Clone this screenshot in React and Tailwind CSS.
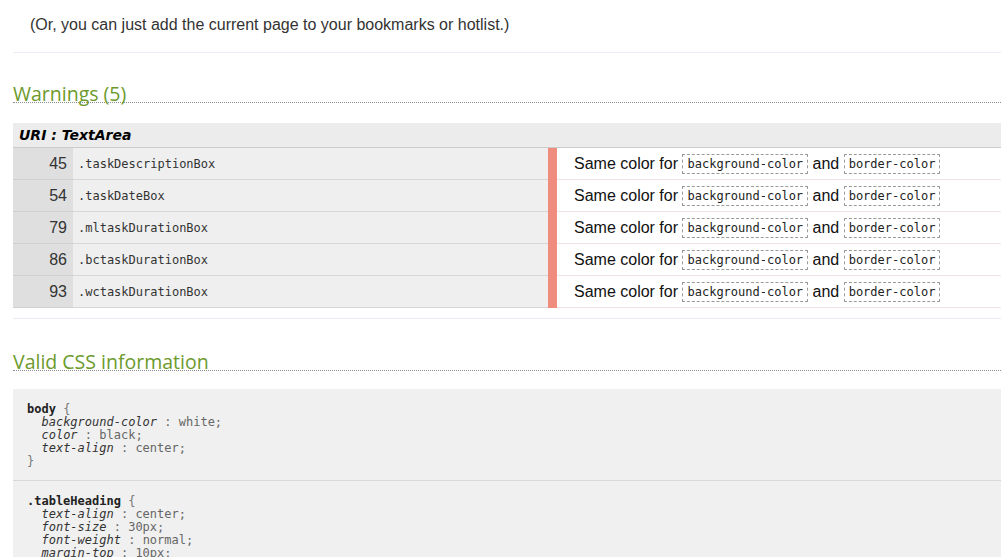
import React from "react";

const rows = [
  ["45", ".taskDescriptionBox"],
  ["54", ".taskDateBox"],
  ["79", ".mltaskDurationBox"],
  ["86", ".bctaskDurationBox"],
  ["93", ".wctaskDurationBox"],
];

function Code({ children }) {
  return (
    <code className="inline-block h-[20px] leading-[18px] px-[4px] border border-dashed border-[#9a9a9a] font-['DejaVu_Sans_Mono',monospace] text-[12px] text-[#222] align-middle">
      {children}
    </code>
  );
}

function Heading({ children }) {
  return (
    <h2 className="ml-[13px] h-[21px] border-b border-dotted border-[#8f8f8f] font-['Open_Sans',sans-serif] text-[19.5px] leading-[24px] text-[#6c9a2c] font-normal whitespace-nowrap">
      {children}
    </h2>
  );
}

function Block({ sel, props, last }) {
  return (
    <div className={"pl-[14px] pt-[14px] pb-[12px] " + (last ? "" : "border-b border-[#d9d9d9]")}>
      <div className="font-['DejaVu_Sans_Mono',monospace] text-[12px] leading-[13px] whitespace-pre">
        <div>
          <span className="font-bold text-[#222]">{sel}</span>
          <span className="text-[#777]"> {"{"}</span>
        </div>
        {props.map(([p, v]) => (
          <div key={p}>
            <span>  </span>
            <span className="italic text-[#333]">{p}</span>
            <span className="text-[#666]"> : {v};</span>
          </div>
        ))}
        <div className="text-[#777]">{"}"}</div>
      </div>
    </div>
  );
}

export default function App() {
  return (
    <div className="w-[1001px] h-[557px] overflow-hidden bg-white font-['Liberation_Sans',Arial,sans-serif] text-[#222]">
      <p className="pl-[30px] pt-[16px] text-[16px] leading-[18px] text-[#333]">
        (Or, you can just add the current page to your bookmarks or hotlist.)
      </p>
      <div className="ml-[13px] mt-[18px] border-t border-[#ececf4]" />

      <div className="mt-[29px]">
        <Heading>Warnings (5)</Heading>
      </div>

      <div className="ml-[13px] mt-[20px]">
        <div className="h-[25px] bg-[#ececec] border-b border-[#cccccc] pl-[6px] font-['DejaVu_Sans',sans-serif] font-bold italic text-[14px] leading-[24px] text-black">
          URI : TextArea
        </div>
        {rows.map(([n, s]) => (
          <div key={n} className="flex h-[32px]">
            <div className="w-[60px] bg-[#dfdfdf] border-b border-[#d0d0d0] text-right pr-[6px] text-[16px] leading-[31px] text-[#333]">
              {n}
            </div>
            <div className="w-[475px] bg-[#efefef] border-b border-[#d6d6d6] pl-[5px] font-['DejaVu_Sans_Mono',monospace] text-[12px] leading-[32px] text-[#333]">
              {s}
            </div>
            <div className="w-[9px] bg-[#f08c7e]" />
            <div className="flex-1 border-b border-[#f0e2e2] pl-[17px] flex items-center text-[16px] whitespace-nowrap text-[#111]">
              <span>Same color for&nbsp;</span>
              <Code>background-color</Code>
              <span>&nbsp;and&nbsp;</span>
              <Code>border-color</Code>
            </div>
          </div>
        ))}
        <div className="mt-[10px] border-t border-[#ececf4]" />
      </div>

      <div className="mt-[31px]">
        <Heading>Valid CSS information</Heading>
      </div>

      <div className="ml-[13px] mt-[18px] bg-[#f0f0f0]">
        <Block
          sel="body"
          props={[
            ["background-color", "white"],
            ["color", "black"],
            ["text-align", "center"],
          ]}
        />
        <Block
          sel=".tableHeading"
          last
          props={[
            ["text-align", "center"],
            ["font-size", "30px"],
            ["font-weight", "normal"],
            ["margin-top", "10px"],
            ["margin-bottom", "10px"],
          ]}
        />
      </div>
    </div>
  );
}
